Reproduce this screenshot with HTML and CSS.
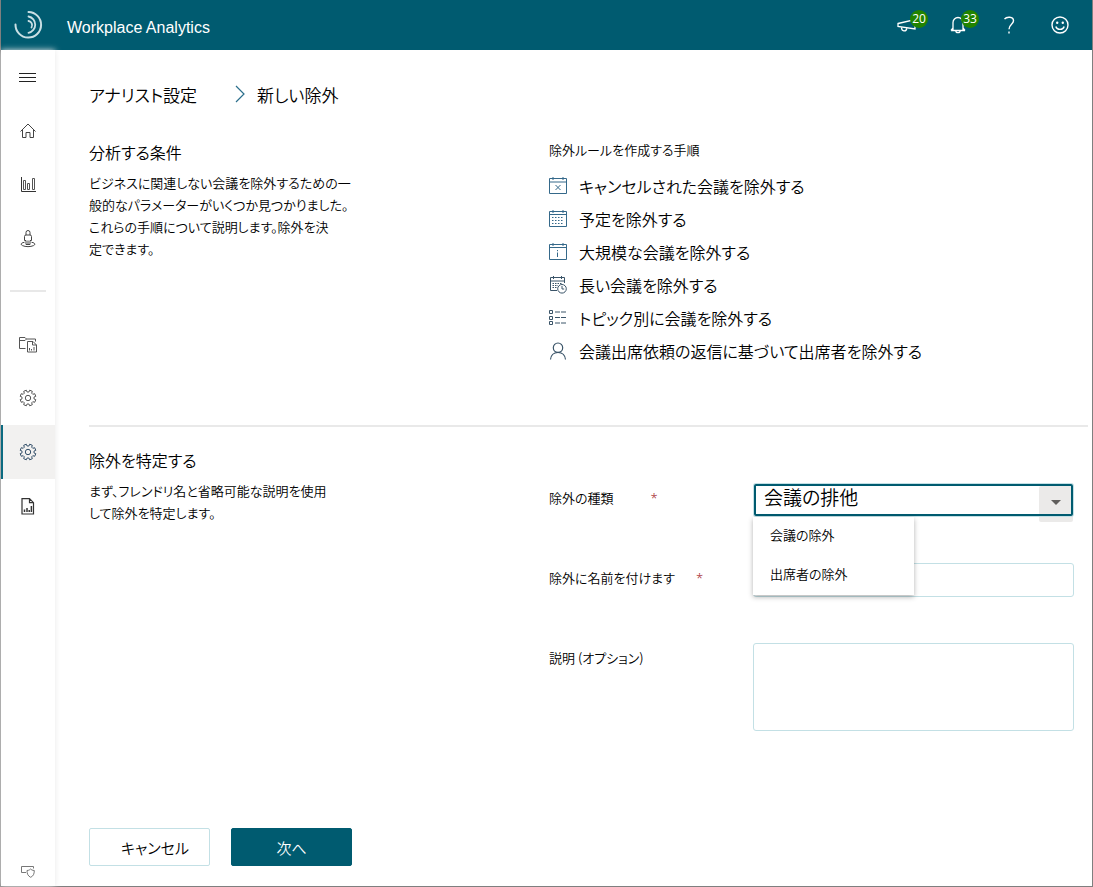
FILE: index.html
```html
<!DOCTYPE html>
<html lang="ja">
<head>
<meta charset="utf-8">
<title>Workplace Analytics</title>
<link rel="stylesheet" href="styles.css">
</head>
<body>
<div class="app">
  <header class="topbar">
    <svg class="logo" width="30" height="30" viewBox="0 0 30 30" fill="none" stroke="#c9dfe4" stroke-linecap="round">
      <path d="M2.500 14.500A12.800 12.800 0 1 0 15.500 2" stroke-width="2"/>
      <path d="M15.500 6.500A8.300 8.300 0 0 1 15.500 22.800" stroke-width="1.800"/>
      <path d="M15.500 11A4.300 4.300 0 0 1 18.500 17.500" stroke-width="1.800"/>
    </svg>
    <span class="brand">Workplace Analytics</span>
    <div class="tools">
      <button class="tool" type="button" aria-label="お知らせ">
        <svg width="20" height="18" viewBox="0 0 20 18" fill="none" stroke="#fff" stroke-width="1.300"><path d="M1 7.500L18 3.500V13L1 10.500ZM4.500 11.500C4.500 15.500 9 16.200 9.800 12.500"/></svg>
        <span class="badge">20</span>
      </button>
      <button class="tool" type="button" aria-label="通知">
        <svg width="16" height="18" viewBox="0 0 16 18" fill="none" stroke="#fff" stroke-width="1.300"><path d="M1 14.500H15M3 14.500V6.500A5 5 0 0 1 13 6.500V14.500M5.800 14.500A2.200 2.200 0 0 0 10.200 14.500M1 14.500L3 12M15 14.500L13 12"/></svg>
        <span class="badge">33</span>
      </button>
      <button class="tool" type="button" aria-label="ヘルプ">
        <svg width="12" height="18" viewBox="0 0 12 18" fill="none" stroke="#fff" stroke-width="1.400"><path d="M1.500 3.200C3.500 .4 10.500 .2 10.500 4.800C10.500 8.200 6 8.500 6 13.200"/><path d="M6 15.600V17.400"/></svg>
      </button>
      <button class="tool" type="button" aria-label="フィードバック">
        <svg width="18" height="18" viewBox="0 0 18 18" fill="none" stroke="#fff" stroke-width="1.400"><circle cx="9" cy="9" r="8"/><path d="M4.800 10.500C6 14.300 12 14.300 13.200 10.500"/><circle cx="6.200" cy="6.800" r="1.200" fill="#fff" stroke="none"/><circle cx="11.800" cy="6.800" r="1.200" fill="#fff" stroke="none"/></svg>
      </button>
    </div>
  </header>
  <div class="body">
    <nav class="side">
      <button class="side-item" type="button" aria-label="メニュー">
        <svg width="18" height="10" viewBox="0 0 18 10" stroke="#222" stroke-width="1"><path d="M0 1.500H17M0 5.500H17M0 9.500H17"/></svg>
      </button>
      <a class="side-item" href="#" aria-label="ホーム">
        <svg width="16" height="16" viewBox="0 0 16 16" fill="none" stroke="#444"><path d="M.5 8.500L8 1L15.500 8.500M2.500 7V14.500H6V9.500H10V14.500H13.500V7"/></svg>
      </a>
      <a class="side-item" href="#" aria-label="分析">
        <svg width="16" height="16" viewBox="0 0 16 16" fill="none" stroke="#555"><path d="M1.500 0V14.500H16" stroke="#333"/><path d="M3.500 3.500H5.500V12.500H3.500ZM7.500 6.500H9.500V12.500H7.500ZM12.500 1.500H14.500V12.500H12.500Z"/></svg>
      </a>
      <a class="side-item" href="#" aria-label="個人">
        <svg width="16" height="18" viewBox="0 0 16 18" fill="none" stroke="#444"><path d="M6 5V2.500A2 2 0 0 1 10 2.500V5M4.500 10.500V6.500A1.500 1.500 0 0 1 6 5H10A1.500 1.500 0 0 1 11.500 6.500V10.500H10V14.500H6V10.500ZM8 10.500V14.500M4.500 12.300C.5 12.800 .5 14.800 2.500 15.600C5.500 17 10.500 17 13.500 15.600C15.500 14.800 15.500 12.800 11.500 12.300"/></svg>
      </a>
      <hr class="side-rule">
      <a class="side-item" href="#" aria-label="レポート フォルダー">
        <svg width="18" height="17" viewBox="0 0 18 17" fill="none" stroke="#555"><path d="M6.500 12.500H.5V1.500H6L7.500 3H16.500V5.500M.5 4.500H6L7.500 3M8.500 5.500H14L17.500 9V16H8.500ZM13.500 5.500V9H17.500M10.500 14.500V12M12.500 14.500V13M15 14.500V11"/></svg>
      </a>
      <a class="side-item" href="#" aria-label="設定">
        <svg width="18" height="18" viewBox="0 0 18 18" fill="none" stroke="#555" stroke-linejoin="round"><path d="M7.300 1.200L8.100 3H9.900L10.700 1.200L13.300 2.300L12.700 4.200L13.800 5.300L15.700 4.700L16.800 7.300L15 8.100V9.900L16.800 10.700L15.700 13.300L13.800 12.700L12.700 13.800L13.300 15.700L10.700 16.800L9.900 15H8.100L7.300 16.800L4.700 15.700L5.300 13.800L4.200 12.700L2.300 13.300L1.200 10.700L3 9.900V8.100L1.200 7.300L2.300 4.700L4.200 5.300L5.300 4.200L4.700 2.300Z"/><circle cx="9" cy="9" r="2.700"/></svg>
      </a>
      <a class="side-item current" href="#" aria-label="アナリスト設定" aria-current="page">
        <svg width="18" height="18" viewBox="0 0 18 18" fill="none" stroke="#34506a" stroke-linejoin="round"><path d="M7.300 1.200L8.100 3H9.900L10.700 1.200L13.300 2.300L12.700 4.200L13.800 5.300L15.700 4.700L16.800 7.300L15 8.100V9.900L16.800 10.700L15.700 13.300L13.800 12.700L12.700 13.800L13.300 15.700L10.700 16.800L9.900 15H8.100L7.300 16.800L4.700 15.700L5.300 13.800L4.200 12.700L2.300 13.300L1.200 10.700L3 9.900V8.100L1.200 7.300L2.300 4.700L4.200 5.300L5.300 4.200L4.700 2.300Z"/><circle cx="9" cy="9" r="2.700"/></svg>
      </a>
      <a class="side-item" href="#" aria-label="レポート">
        <svg width="14" height="17" viewBox="0 0 14 17" fill="none" stroke="#333" stroke-width="1.200"><path d="M1 .7H8.500L12.500 4.700V16H1ZM8.500 .7V4.700H12.500"/><path d="M3.500 14V11.500M6 14V10M8.200 14V12M10.400 14V8" stroke-width="1.500"/></svg>
      </a>
      <a class="side-item side-foot" href="#" aria-label="プライバシー">
        <svg width="14" height="13" viewBox="0 0 14 13" fill="none" stroke="#777"><path d="M5 7.500H.5V1.500H12.500V3.500M6 5.500C8 5.500 9 4.500 9.500 4C10 4.500 11.500 5.500 13.300 5.500C13.300 9 12.300 11 9.700 12.300C7 11 6 9 6 5.500Z"/></svg>
      </a>
    </nav>
    <main class="main">
      <nav class="crumbs">
        <a class="crumb-parent" href="#">アナリスト設定</a>
        <svg width="10" height="18" viewBox="0 0 10 18" fill="none" stroke="#2b6f8c" stroke-width="1.200"><path d="M1 1L9 9L1 17"/></svg>
        <span>新しい除外</span>
      </nav>
      <section class="section steps">
        <div class="intro">
          <h2 class="heading">分析する条件</h2>
          <p class="text">ビジネスに関連しない会議を除外するための一<br>般的なパラメーターがいくつか見つかりました。<br>これらの手順について説明します。除外を決<br>定できます。</p>
        </div>
        <div>
          <h3 class="subheading">除外ルールを作成する手順</h3>
          <ul class="rules">
            <li class="rule"><svg width="18" height="18" viewBox="0 0 18 18" fill="none" stroke="#35698a"><path d="M.5 1.500H17.500V16.500H.5ZM.5 5H17.500M4 0V3M14 0V3M6.500 8L11.500 13M11.500 8L6.500 13"/></svg>キャンセルされた会議を除外する</li>
            <li class="rule"><svg width="18" height="18" viewBox="0 0 18 18" fill="none" stroke="#35698a"><path d="M.5 1.500H17.500V16.500H.5ZM.5 4.500H17.500M4 0V3M14 0V3"/><path d="M3 7.500H15M3 10.500H15M3 13.500H15" stroke-dasharray="1.500 1.500"/></svg>予定を除外する</li>
            <li class="rule"><svg width="18" height="18" viewBox="0 0 18 18" fill="none" stroke="#35698a"><path d="M.5 1.500H17.500V16.500H.5ZM.5 4.500H17.500M4 0V3M14 0V3M8.500 7V8.200M8.500 9.500V14"/></svg>大規模な会議を除外する</li>
            <li class="rule"><svg width="18" height="18" viewBox="0 0 18 18" fill="none" stroke="#3a5468"><path d="M8 14.500H1.500V1.500H15.500V7M1.500 5H15.500M4.500 0V3M12.500 0V3"/><path d="M3.500 7.500H13M3.500 9.500H9M3.500 11.500H8" stroke-dasharray="1.500 1"/><circle cx="13" cy="12.800" r="4.300" fill="#fff"/><path d="M13 10V13H15.200"/></svg>長い会議を除外する</li>
            <li class="rule"><svg width="18" height="18" viewBox="0 0 18 18" fill="none" stroke="#3a5468"><path d="M.5 1.500H3.500V4.500H.5ZM.5 7.500H3.500V10.500H.5ZM.5 12.500H3.500V15.500H.5Z"/><path d="M6 3H17M6 8.500H17M6 14H17" stroke-dasharray="5 1"/></svg>トピック別に会議を除外する</li>
            <li class="rule"><svg width="18" height="18" viewBox="0 0 18 18" fill="none" stroke="#3a5468" stroke-width="1.200"><circle cx="9" cy="5.700" r="4.700"/><path d="M1.500 17.500C2 13 5 10.500 9 10.500S16 13 16.500 17.500"/></svg>会議出席依頼の返信に基づいて出席者を除外する</li>
          </ul>
        </div>
      </section>
      <hr class="rule-line">
      <form class="form">
        <div class="section">
          <div class="intro">
            <h2 class="heading">除外を特定する</h2>
            <p class="text">まず、フレンドリ名と省略可能な説明を使用<br>して除外を特定します。</p>
          </div>
          <div class="fields">
            <div class="field">
              <label class="label label-wide" for="kind">除外の種類<span class="req">*</span></label>
              <div class="combo">
                <span class="combo-arrow"></span>
                <select class="combo-select" id="kind"><option>会議の排他</option></select>
                <ul class="menu">
                  <li><button class="menu-item" type="button">会議の除外</button></li>
                  <li><button class="menu-item" type="button">出席者の除外</button></li>
                </ul>
              </div>
            </div>
            <div class="field">
              <label class="label" for="name">除外に名前を付けます<span class="req">*</span></label>
              <input class="box" id="name" type="text">
            </div>
            <div class="field">
              <label class="label" for="desc">説明 (オプション)</label>
              <textarea class="box area" id="desc"></textarea>
            </div>
          </div>
        </div>
        <div class="actions">
          <button class="btn btn-cancel" type="button">キャンセル</button>
          <button class="btn btn-next" type="submit">次へ</button>
        </div>
      </form>
    </main>
  </div>
</div>
</body>
</html>
```
FILE: styles.css
```css
* { box-sizing: border-box; }

body {
  margin: 0;
  background: #fff;
  color: #000;
  font-family: "Noto Sans CJK JP", sans-serif;
  font-weight: 350;
  font-feature-settings: "palt";
}

button, input, select, textarea { font: inherit; font-feature-settings: inherit; color: inherit; }
h2, h3, p, ul { margin: 0; padding: 0; font-weight: inherit; }
ul { list-style: none; }
a { color: inherit; text-decoration: none; }
svg { display: block; flex: none; }

.app {
  display: flex;
  flex-direction: column;
  min-height: 100vh;
  border: 1px solid #7f7f7f;
  border-top: 0;
}

/* Top bar */
.topbar {
  display: flex;
  align-items: center;
  height: 50px;
  padding: 0 7px 0 12px;
  background: #005b70;
  color: #fff;
}
.brand {
  margin-left: 24px;
  padding-top: 5px;
  font: 16px "Liberation Sans", Arial, sans-serif;
}
.tools { display: flex; margin-left: auto; }
.tool {
  position: relative;
  display: flex;
  align-items: center;
  justify-content: center;
  width: 51px;
  height: 48px;
  padding: 0;
  border: 0;
  background: none;
}
.badge {
  position: absolute;
  top: 9px;
  left: 29px;
  width: 18px;
  height: 18px;
  border-radius: 9px;
  background: #218300;
  color: #fff;
  font: 12px/18px "Open Sans", sans-serif;
  text-align: center;
}

/* Side navigation */
.body { display: flex; flex: 1; }
.side {
  position: relative;
  display: flex;
  flex-direction: column;
  flex: none;
  width: 54px;
  background: #fff;
  box-shadow: 0 0 6px #e8e8e8;
}
.side-item {
  display: flex;
  align-items: center;
  justify-content: center;
  width: 100%;
  height: 54px;
  padding: 0;
  border: 0;
  background: none;
}
.side-item.current {
  background: #f2f1f0;
  box-shadow: inset 2px 0 #0b6a80;
}
.side-rule {
  width: 36px;
  height: 2px;
  margin: 24px 9px 25px;
  border: 0;
  background: #e8e8e8;
}
.side-foot { height: 30px; margin-top: auto; }

/* Content */
.main {
  display: flex;
  flex-direction: column;
  flex: 1;
  min-width: 0;
  padding: 32px 4px 20px 34px;
}
.crumbs {
  display: flex;
  align-items: center;
  height: 24px;
  font-size: 17px;
}
.crumb-parent { width: 146px; }
.crumbs span { margin-left: 12px; }
.section {
  display: grid;
  grid-template-columns: 460px 1fr;
  padding-right: 14px;
}
.steps { padding-top: 32px; }
.heading { font-size: 16px; line-height: 24px; padding-top: 2px; }
.text { margin-top: 8px; font-size: 13px; line-height: 22px; white-space: nowrap; }
.subheading { font-size: 13px; line-height: 24px; }
.rules { margin-top: 7px; }
.rule {
  display: flex;
  align-items: center;
  gap: 12px;
  height: 33px;
  font-size: 16px;
}
.rule-line {
  width: 100%;
  height: 2px;
  margin: 58px 0 0;
  border: 0;
  background: #e9e9e9;
}

/* Form */
.form { display: flex; flex-direction: column; flex: 1; }
.form .intro { padding-top: 19px; }
.fields { padding-top: 56px; }
.field {
  display: grid;
  grid-template-columns: 204px 1fr;
  align-items: start;
}
.field + .field { margin-top: 46px; }
.label { padding-top: 4px; font-size: 13px; line-height: 22px; }
.req { margin-left: 21px; color: #a4262c; font-family: "Noto Sans", sans-serif; }
.label-wide .req { margin-left: 37px; }
.box {
  width: 100%;
  height: 34px;
  padding: 4px 10px;
  border: 1px solid #c3e0e5;
  border-radius: 3px;
  background: #fff;
  outline: 0;
  font-size: 13px;
}
.area { display: block; height: 88px; resize: none; }
.combo { position: relative; height: 34px; padding: 1px; }
.combo-select {
  position: relative;
  display: block;
  appearance: none;
  width: 100%;
  height: 32px;
  padding: 0 40px 6px 8px;
  border: 2px solid #005b70;
  border-radius: 2px;
  outline: 0;
  background: none;
  box-shadow: 0 0 0 1px #c3e0e5;
  font-size: 19px;
  line-height: 22px;
}
.combo-arrow {
  position: absolute;
  top: 3px;
  right: 1px;
  width: 34px;
  height: 36px;
  border-radius: 2px;
  background: #ebeae9;
}
.combo-arrow::after {
  content: "";
  position: absolute;
  top: 14px;
  left: 12px;
  border: 5px solid transparent;
  border-top-color: #605e5c;
}
.menu {
  position: absolute;
  top: 34px;
  left: 0;
  z-index: 2;
  width: 161px;
  background: #fff;
  box-shadow: 0 2px 5px rgba(0, 0, 0, .3);
}
.menu-item {
  display: block;
  width: 100%;
  height: 39px;
  padding: 0 17px 5px;
  border: 0;
  background: none;
  font-size: 13px;
  text-align: left;
}
.actions { display: flex; gap: 21px; margin-top: auto; }
.btn {
  width: 121px;
  height: 38px;
  padding: 0;
  border: 1px solid #c3e0e5;
  border-radius: 2px;
  background: #fff;
  font-size: 15px;
}
.btn-cancel { padding-left: 11px; }
.btn-next { border-color: #005b70; background: #005b70; color: #fff; }
```
